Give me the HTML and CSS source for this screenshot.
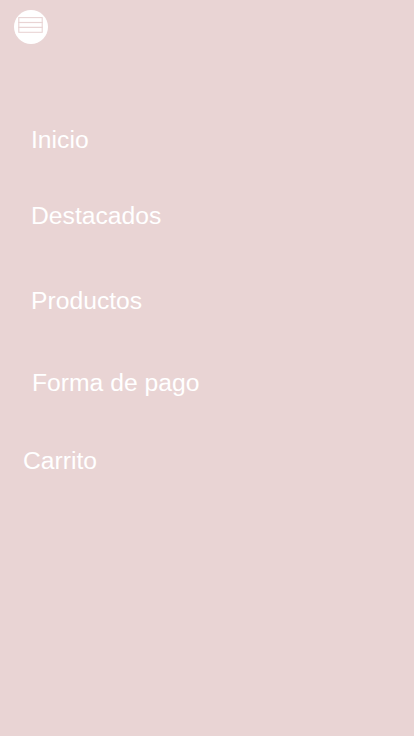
FILE: index.html
```html
<!DOCTYPE html>
<html lang="es">
<head>
<meta charset="utf-8">
<title>Menú</title>
<link rel="stylesheet" href="styles.css">
</head>
<body>
<header class="top">
  <button class="menu-btn" aria-label="Menú">
    <svg width="34" height="34" viewBox="0 0 34 34">
      <circle cx="17" cy="17" r="17" fill="#ffffff"/>
      <rect x="4.8" y="7.6" width="23.4" height="4.9" fill="none" stroke="#e9d4d4" stroke-width="1.1"/>
      <rect x="4.8" y="12.5" width="23.4" height="4.9" fill="none" stroke="#e9d4d4" stroke-width="1.1"/>
      <rect x="4.8" y="17.4" width="23.4" height="4.9" fill="none" stroke="#e9d4d4" stroke-width="1.1"/>
    </svg>
  </button>
</header>
<nav class="nav">
  <a class="nav-link item-inicio" href="#">Inicio</a>
  <a class="nav-link item-destacados" href="#">Destacados</a>
  <a class="nav-link item-productos" href="#">Productos</a>
  <a class="nav-link item-pago" href="#">Forma de pago</a>
  <a class="nav-link item-carrito" href="#">Carrito</a>
</nav>
</body>
</html>
```
FILE: styles.css
```css
html, body {
  margin: 0;
  padding: 0;
}
body {
  background: #e9d4d4;
  font-family: "Liberation Sans", Arial, sans-serif;
  min-height: 736px;
}
.top {
  padding: 10px 0 0 14px;
  height: 34px;
}
.menu-btn {
  display: block;
  width: 34px;
  height: 34px;
  padding: 0;
  border: 0;
  background: none;
}
.menu-btn svg {
  display: block;
}
.nav {
  display: flex;
  flex-direction: column;
  align-items: flex-start;
}
.nav-link {
  display: block;
  color: #ffffff;
  text-decoration: none;
  font-size: 24.7px;
  line-height: 28px;
  padding-left: 31px;
}
.item-inicio { margin-top: 82px; }
.item-destacados { margin-top: 48px; }
.item-productos { margin-top: 57px; }
.item-pago { margin-top: 54px; padding-left: 32px; }
.item-carrito { margin-top: 50px; padding-left: 23px; }
```
